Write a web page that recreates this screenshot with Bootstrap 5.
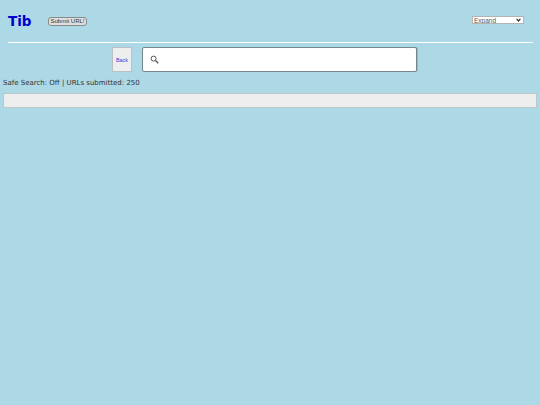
<!DOCTYPE html>
<html lang="en">
<head>
<meta charset="utf-8">
<title>Tib</title>
<link href="https://cdn.jsdelivr.net/npm/bootstrap@5.3.0/dist/css/bootstrap.min.css" rel="stylesheet">
<style>
html, body { height: 100%; }
body { background: #add8e6; font-family: "DejaVu Sans", sans-serif; font-size: 8px; color: #222; margin: 0; }
.top-bar { height: 42px; padding: 0 16px 0 8px; }
.brand { font-size: 13.5px; font-weight: 700; color: #0000cd; text-decoration: none; width: 40px; line-height: 1; padding-top: 1px; }
.submit-btn { font: 6px "Liberation Sans", sans-serif; padding: 0; height: 9px; line-height: 7px; width: 39px; background: #dfdfdf; border: 1px solid #8a8a8a; border-radius: 3px; color: #333; white-space: nowrap; text-align: center; }
.mode-select { font: 6.5px/7px "Liberation Sans", sans-serif; width: 52px; height: 8px; margin-bottom: 2px; padding: 0 0 0 1px; border: 1px solid #b4b4b4; color: #555; border-radius: 0; appearance: none; -webkit-appearance: none; background: #fff url("data:image/svg+xml,%3Csvg xmlns='http://www.w3.org/2000/svg' width='5' height='4' viewBox='0 0 5 4'%3E%3Cpath d='M.6.8 2.5 3 4.4.8' fill='none' stroke='%23333' stroke-width='1.2'/%3E%3C/svg%3E") no-repeat right 2px center; }
.rule { height: 1px; background: #fff; margin: 0 7px 0 8px; }
.search-row { padding: 4px 0 0 112px; gap: 10px; height: 30px; }
.back-box { width: 20px; height: 25px; background: #eee; border: 1px solid #b8c2c6; font: 5.5px "Liberation Sans", sans-serif; color: #3a3ae0; text-decoration: none; }
.search-box { width: 275px; height: 25px; background: #fff; border: 1px solid #75878d; border-radius: 2px; padding-left: 7px; box-shadow: 1px 0 0 #9db4bc; }
.status { padding: 5px 0 0 3px; line-height: 10px; font-size: 7px; color: #333; }
.result-panel { height: 15px; margin: 5px 3px 0; background: #eee; border: 1px solid #bbc8cc; }
</style>
</head>
<body>
<div class="top-bar d-flex align-items-center">
  <a class="brand" href="#">Tib</a>
  <button class="submit-btn" type="button">Submit URL!</button>
  <select class="mode-select ms-auto" aria-label="Mode"><option>Expand</option></select>
</div>
<div class="rule"></div>
<div class="search-row d-flex">
  <a class="back-box d-flex align-items-center justify-content-center" href="#">Back</a>
  <div class="search-box d-flex align-items-center">
    <svg width="9" height="9" viewBox="0 0 9 9" fill="none" stroke="#555" aria-hidden="true">
      <circle cx="3.6" cy="3.6" r="2.5" stroke-width="1"/>
      <path d="M5.5 5.5 8.3 8.3" stroke-width="1.3"/>
    </svg>
  </div>
</div>
<div class="status">Safe Search: Off | URLs submitted: 250</div>
<div class="result-panel"></div>
<script src="https://cdn.jsdelivr.net/npm/bootstrap@5.3.0/dist/js/bootstrap.bundle.min.js"></script>
</body>
</html>
